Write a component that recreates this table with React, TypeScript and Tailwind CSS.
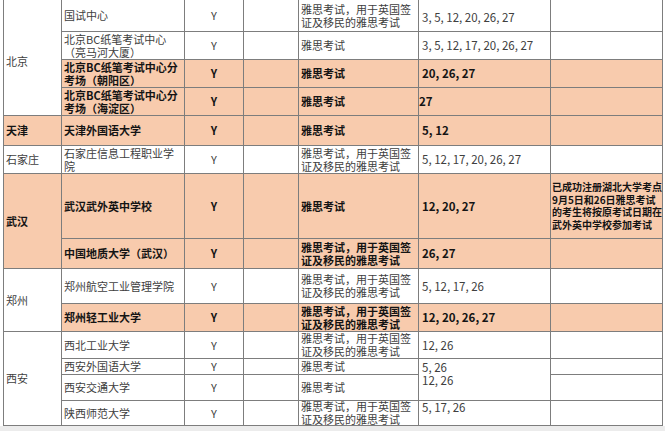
type Row = {
  name: string[];
  hl: boolean;
  test: string[];
  dates: string;
  dateCls?: string;
  note?: string[];
};

type City = { label: string; start: number; span: number; hl: boolean; cls?: string };

const cities: City[] = [
  { label: "北京", start: 0, span: 4, hl: false, cls: "pt-2" },
  { label: "天津", start: 4, span: 1, hl: true },
  { label: "石家庄", start: 5, span: 1, hl: false },
  { label: "武汉", start: 6, span: 2, hl: true },
  { label: "郑州", start: 8, span: 2, hl: false },
  { label: "西安", start: 10, span: 4, hl: false },
];

const VISA = ["雅思考试，用于英国签", "证及移民的雅思考试"];

const rows: Row[] = [
  { name: ["国试中心"], hl: false, test: VISA, dates: "3, 5, 12, 20, 26, 27", dateCls: "justify-center pt-1" },
  { name: ["北京BC纸笔考试中心", "（亮马河大厦）"], hl: false, test: ["雅思考试"], dates: "3, 5, 12, 17, 20, 26, 27" },
  { name: ["北京BC纸笔考试中心分", "考场（朝阳区）"], hl: true, test: ["雅思考试"], dates: "20, 26, 27" },
  { name: ["北京BC纸笔考试中心分", "考场（海淀区）"], hl: true, test: ["雅思考试"], dates: "27", dateCls: "justify-center !pl-0" },
  { name: ["天津外国语大学"], hl: true, test: ["雅思考试"], dates: "5, 12" },
  { name: ["石家庄信息工程职业学", "院"], hl: false, test: VISA, dates: "5, 12, 17, 20, 26, 27" },
  {
    name: ["武汉武外英中学校"],
    hl: true,
    test: ["雅思考试"],
    dates: "12, 20, 27",
    note: ["已成功注册湖北大学考点", "9月5日和26日雅思考试", "的考生将按原考试日期在", "武外英中学校参加考试"],
  },
  { name: ["中国地质大学（武汉）"], hl: true, test: VISA, dates: "26, 27" },
  { name: ["郑州航空工业管理学院"], hl: false, test: VISA, dates: "5, 12, 17, 26" },
  { name: ["郑州轻工业大学"], hl: true, test: VISA, dates: "12, 20, 26, 27" },
  { name: ["西北工业大学"], hl: false, test: VISA, dates: "12, 26" },
  { name: ["西安外国语大学"], hl: false, test: ["雅思考试"], dates: "5, 26", dateCls: "justify-end" },
  { name: ["西安交通大学"], hl: false, test: ["雅思考试"], dates: "12, 26", dateCls: "justify-start -mt-px" },
  { name: ["陕西师范大学"], hl: false, test: VISA, dates: "5, 17, 26", dateCls: "justify-start" },
];

const rowSpanCls: Record<number, string> = {
  1: "row-span-1",
  2: "row-span-2",
  4: "row-span-4",
};

function Cell({ hl, className = "", children }: { hl: boolean; className?: string; children?: React.ReactNode }) {
  return (
    <div
      className={`flex min-h-0 flex-col whitespace-nowrap ${
        hl ? "bg-[#f8cbad] font-bold text-[#141414]" : "bg-white text-[#404040]"
      } ${className}`}
    >
      {children}
    </div>
  );
}

const Lines = ({ lines }: { lines: string[] }) => (
  <>
    {lines.map((l, i) => (
      <span key={i}>{l}</span>
    ))}
  </>
);

export default function App() {
  return (
    <div
      className="min-h-[431px] w-[665px] bg-white text-[11px] leading-[13px]"
      style={{ fontFamily: '"Noto Sans CJK SC", "Noto Sans", sans-serif' }}
    >
      <div className="ml-[3px] w-[660px] bg-[#7d7d7d] px-px pb-px">
        <div className="grid grid-cols-[57px_122px_58px_54px_119px_131px_111px] grid-rows-[31px_27px_27px_27px_29px_27px_64px_29px_34px_27px_26px_15px_25px_24px] gap-px">
          {rows.map((r, i) => {
            const city = cities.find((c) => c.start === i);
            return [
              city && (
                <Cell
                  key={`c${i}`}
                  hl={city.hl}
                  className={`${rowSpanCls[city.span]} justify-center pl-[2px] ${city.cls ?? ""}`}
                >
                  {city.label}
                </Cell>
              ),
              <Cell key={`n${i}`} hl={r.hl} className="justify-center pl-[2px]">
                <Lines lines={r.name} />
              </Cell>,
              <Cell key={`y${i}`} hl={r.hl} className="items-center justify-center">
                Y
              </Cell>,
              <Cell key={`e${i}`} hl={r.hl} />,
              <Cell key={`t${i}`} hl={r.hl} className="justify-center pl-[2px]">
                <Lines lines={r.test} />
              </Cell>,
              <Cell key={`d${i}`} hl={r.hl} className={`pl-[3px] text-[11.5px] ${r.dateCls ?? "justify-center"}`}>
                {r.dates}
              </Cell>,
              <Cell key={`x${i}`} hl={r.hl} className="justify-center pl-px text-[10px] leading-[12.5px]">
                {r.note && <Lines lines={r.note} />}
              </Cell>,
            ];
          })}
        </div>
      </div>
      <div className="h-[6px] bg-[#ececec]" />
    </div>
  );
}
